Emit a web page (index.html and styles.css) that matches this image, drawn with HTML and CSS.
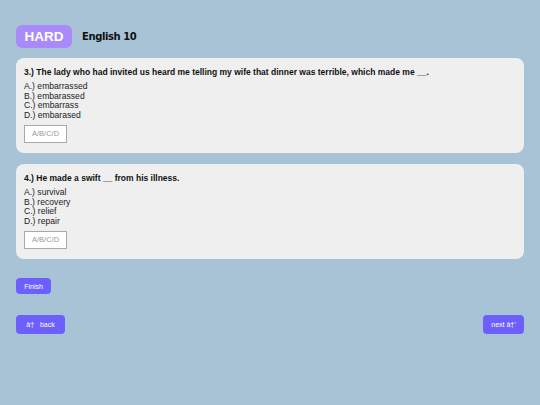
FILE: index.html
```html
<!DOCTYPE html>
<html>
<head>
<meta charset="utf-8">
<link rel="stylesheet" href="styles.css">
</head>
<body>
<div class="header">
  <div class="badge">HARD</div>
  <div class="subject">English 10</div>
</div>
<div class="card">
  <div class="question">3.) The lady who had invited us heard me telling my wife that dinner was terrible, which made me __.</div>
  <div class="options">
    <div>A.) embarrassed</div>
    <div>B.) embarassed</div>
    <div>C.) embarrass</div>
    <div>D.) embarased</div>
  </div>
  <div class="answer">A/B/C/D</div>
</div>
<div class="card">
  <div class="question">4.) He made a swift __ from his illness.</div>
  <div class="options">
    <div>A.) survival</div>
    <div>B.) recovery</div>
    <div>C.) relief</div>
    <div>D.) repair</div>
  </div>
  <div class="answer">A/B/C/D</div>
</div>
<div class="finish-row"><button class="btn finish">Finish</button></div>
<div class="nav">
  <button class="btn back">â†&nbsp;&nbsp;&nbsp;back</button>
  <button class="btn next">next â†’</button>
</div>
</body>
</html>
```

FILE: styles.css
```css
html, body {
  margin: 0;
  background: #a9c3d6;
}
body {
  padding: 25px 16px 0;
  font-family: "Liberation Sans", Arial, sans-serif;
  color: #111;
}
.header {
  display: flex;
  align-items: center;
  gap: 10px;
  height: 23px;
}
.badge {
  width: 56px;
  height: 23px;
  border-radius: 6px;
  background: #a88bf8;
  color: #fff;
  font-weight: bold;
  font-size: 13.5px;
  display: flex;
  align-items: center;
  justify-content: center;
}
.subject {
  font-family: "DejaVu Sans", sans-serif;
  font-weight: bold;
  font-size: 10px;
  letter-spacing: -0.4px;
  color: #111;
}
.card {
  background: #efefef;
  border-radius: 8px;
  margin-top: 10px;
  padding: 9px 8px 12px;
  height: 74px;
}
.card + .card { margin-top: 11px; }
.question {
  font-weight: bold;
  font-size: 8.5px;
  line-height: 11px;
}
.options {
  margin-top: 4px;
  font-size: 8.6px;
  line-height: 9.7px;
  color: #222;
}
.answer {
  margin-top: 4px;
  width: 41px;
  height: 16px;
  border: 1px solid #a8a8a8;
  background: #fff;
  color: #999;
  font-size: 7.5px;
  display: flex;
  align-items: center;
  justify-content: center;
}
.finish-row {
  margin-top: 19px;
}
.btn {
  border: none;
  background: #6c5ffd;
  color: #fff;
  font-family: "Liberation Sans", Arial, sans-serif;
  font-size: 7px;
  border-radius: 4px;
  padding: 0;
  display: flex;
  align-items: center;
  justify-content: center;
}
.finish { width: 35px; height: 16px; }
.nav {
  margin-top: 21px;
  display: flex;
  justify-content: space-between;
}
.back { width: 49px; height: 19px; }
.next { width: 41px; height: 19px; }
```
